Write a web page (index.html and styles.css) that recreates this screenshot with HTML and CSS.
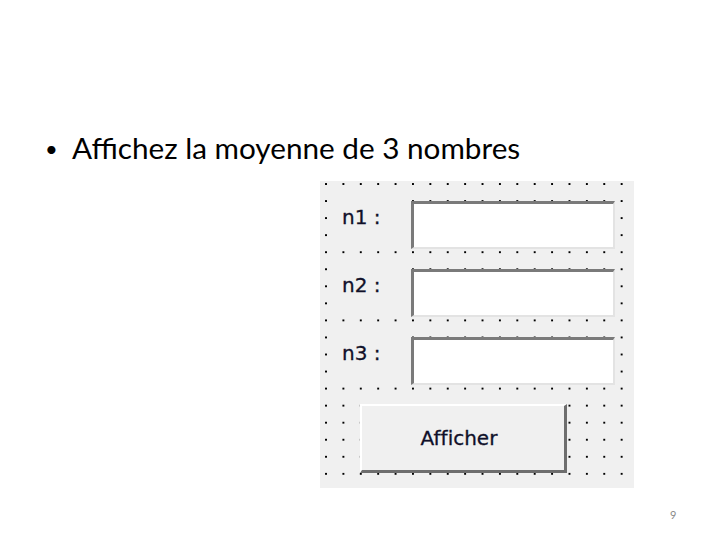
FILE: index.html
```html
<!DOCTYPE html>
<html>
<head>
  <meta charset="UTF-8" />
  <title>Moyenne de 3 nombres</title>
  <link rel="stylesheet" href="styles.css">
</head>
<body>
  <div class="slide">
    <p class="point"><span class="bullet">•</span>Affichez la moyenne de 3 nombres</p>

    <!-- fenêtre du formulaire, en mode conception -->
    <div class="form">
      <div class="row">
        <label for="n1">n1 :</label>
        <input type="text" id="n1" />
      </div>
      <div class="row">
        <label for="n2">n2 :</label>
        <input type="text" id="n2" />
      </div>
      <div class="row">
        <label for="n3">n3 :</label>
        <input type="text" id="n3" />
      </div>
      <button type="button">Afficher</button>
    </div>

    <div class="page-num">9</div>
  </div>
</body>
</html>
```

FILE: styles.css
```css
body {
  margin: 0;
  padding: 0;
  background: #ffffff;
}
.slide {
  width: 720px;
  height: 540px;
  display: flex;
  flex-direction: column;
}
.point {
  margin: 0;
  padding: 130px 0 0 44px;
  font-family: Lato, "Liberation Sans", sans-serif;
  font-size: 29.7px;
  line-height: 36px;
  color: #000;
}
.bullet {
  display: inline-block;
  width: 28px;
  padding-left: 1px;
  box-sizing: border-box;
  font-size: 22px;
  vertical-align: 2px;
}
.form {
  margin: 14px 0 0 320px;
  width: 314px;
  height: 307px;
  box-sizing: border-box;
  padding: 20px 0 0 15px;
  background-color: #f0f0f0;
  background-image: radial-gradient(circle, #000 1.1px, transparent 1.5px);
  background-size: 17.4px 17.05px;
  background-position: -2.7px -5.5px;
  display: flex;
  flex-direction: column;
  gap: 20px;
}
.row {
  display: flex;
  align-items: flex-start;
}
/* le label cache la grille, comme dans le concepteur */
.row label {
  width: 70px;
  height: 44px;
  margin: -8px 6px 0 0;
  box-sizing: border-box;
  padding: 11px 0 0 7px;
  background: #f0f0f0;
  font-family: "DejaVu Sans", sans-serif;
  font-size: 20px;
  line-height: 26px;
  color: #10102a;
  -webkit-text-stroke: 0.3px #10102a;
}
.row input {
  width: 204px;
  height: 48px;
  box-sizing: border-box;
  margin: 0;
  padding: 0;
  background: #fff;
  border-style: solid;
  border-width: 3px 2px 2px 3px;
  border-color: #7a7a7a #e3e3e3 #e3e3e3 #7a7a7a;
  outline: none;
}
button {
  margin: -1px 0 0 25px;
  width: 207px;
  height: 69px;
  box-sizing: border-box;
  background: #f0f0f0;
  border-style: solid;
  border-width: 2px 3px 3px 2px;
  border-color: #ffffff #6e6e6e #6e6e6e #ffffff;
  font-family: "DejaVu Sans", sans-serif;
  font-size: 20px;
  color: #10102a;
  -webkit-text-stroke: 0.3px #10102a;
  padding: 0 8px 0 0;
  font-variant-ligatures: none;
}
.page-num {
  margin: 20px 0 0 670px;
  font-family: Lato, "Liberation Sans", sans-serif;
  font-size: 11px;
  color: #8a8a8a;
}
```
